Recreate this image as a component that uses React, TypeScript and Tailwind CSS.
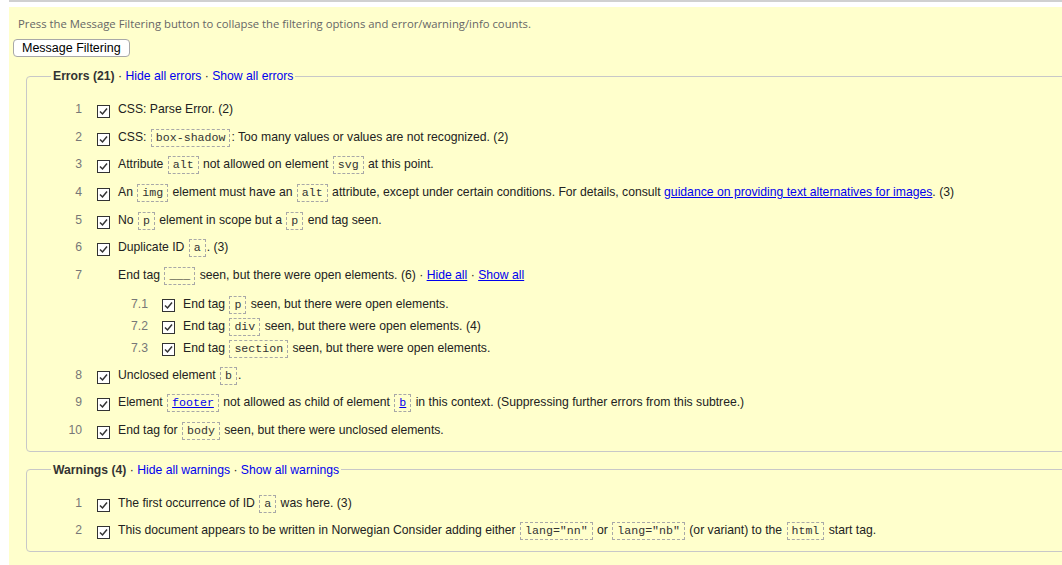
import React from "react";

const C = ({ children, link }: { children: React.ReactNode; link?: boolean }) => (
  <code className="mx-[1px] inline-block border border-dashed border-[#a8a8a8] px-[4px] align-baseline font-['Liberation_Mono',monospace] text-[11.6px] leading-[16px] text-[#333]">
    {link ? <a className="text-[#00e] underline">{children}</a> : children}
  </code>
);

const A = ({ children, underline }: { children: React.ReactNode; underline?: boolean }) => (
  <a className={underline ? "cursor-pointer text-[#00e] underline" : "cursor-pointer text-[#00e]"}>{children}</a>
);

function Check() {
  return (
    <span className="block h-[13px] w-[13px] border border-[#333] bg-white">
      <svg width="11" height="11" viewBox="0 0 11 11" className="block">
        <polyline points="2,5.5 4.5,8 9,2.5" fill="none" stroke="#333" strokeWidth="1.5" />
      </svg>
    </span>
  );
}

function Row({ n, children, box = true }: { n: string; children: React.ReactNode; box?: boolean }) {
  return (
    <div className="flex h-[27.67px] items-start">
      <span className="w-[55px] shrink-0 text-right leading-[27.67px] text-[#777]">{n}</span>
      <span className="ml-[15px] mt-[9px] w-[13px] shrink-0">{box && <Check />}</span>
      <span className="ml-[8px] whitespace-nowrap leading-[27.67px]">{children}</span>
    </div>
  );
}

function SubRow({ n, children }: { n: string; children: React.ReactNode }) {
  return (
    <div className="flex h-[22px] items-start">
      <span className="w-[30px] shrink-0 text-right leading-[22px] text-[#777]">{n}</span>
      <span className="ml-[14px] mt-[6px] w-[13px] shrink-0">
        <Check />
      </span>
      <span className="ml-[8px] whitespace-nowrap leading-[22px]">{children}</span>
    </div>
  );
}

function Group({ legend, hide, show, children, className }: { legend: string; hide: string; show: string; children: React.ReactNode; className?: string }) {
  return (
    <fieldset className={"ml-[13px] w-[1100px] rounded-[4px] border border-[#c8c8c8] pb-[6px] " + (className ?? "")}>
      <legend className="ml-[24px] px-[2px] leading-[14px]">
        <b className="text-[#333]">{legend}</b> · <A>{hide}</A> · <A>{show}</A>
      </legend>
      <div className="pt-[13px]">{children}</div>
    </fieldset>
  );
}

export default function App() {
  return (
    <div className="h-[565px] w-[1062px] overflow-hidden bg-white font-['Liberation_Sans',Arial,sans-serif] text-[12.2px] text-[#222]">
      <div className="ml-[9px] h-[2px] bg-[#d0d0d0]" />
      <div className="ml-[9px] mt-[5px] h-[600px] w-[1120px] bg-[#ffffcc] pl-[4px] pt-[10px]">
        <p className="pl-[5px] font-['Open_Sans',sans-serif] text-[11.3px] leading-[14px] text-[#666]">
          Press the Message Filtering button to collapse the filtering options and error/warning/info counts.
        </p>
        <button className="mt-[8px] block h-[18px] rounded-[4px] border border-[#a8a8a8] bg-white px-[8px] text-[12.5px] leading-[16px] text-black">
          Message Filtering
        </button>

        <Group legend="Errors (21)" hide="Hide all errors" show="Show all errors" className="mt-[12px]">
          <Row n="1">CSS: Parse Error. (2)</Row>
          <Row n="2">
            CSS: <C>box-shadow</C>: Too many values or values are not recognized. (2)
          </Row>
          <Row n="3">
            Attribute <C>alt</C> not allowed on element <C>svg</C> at this point.
          </Row>
          <Row n="4">
            An <C>img</C> element must have an <C>alt</C> attribute, except under certain conditions. For details, consult{" "}
            <A underline>guidance on providing text alternatives for images</A>. (3)
          </Row>
          <Row n="5">
            No <C>p</C> element in scope but a <C>p</C> end tag seen.
          </Row>
          <Row n="6">
            Duplicate ID <C>a</C>. (3)
          </Row>
          <div>
            <Row n="7" box={false}>
              End tag <C>___</C> seen, but there were open elements. (6) · <A underline>Hide all</A> · <A underline>Show all</A>
            </Row>
            <div className="pb-[3px] pl-[91px] pt-[3px]">
              <SubRow n="7.1">
                End tag <C>p</C> seen, but there were open elements.
              </SubRow>
              <SubRow n="7.2">
                End tag <C>div</C> seen, but there were open elements. (4)
              </SubRow>
              <SubRow n="7.3">
                End tag <C>section</C> seen, but there were open elements.
              </SubRow>
            </div>
          </div>
          <Row n="8">
            Unclosed element <C>b</C>.
          </Row>
          <Row n="9">
            Element <C link>footer</C> not allowed as child of element <C link>b</C> in this context. (Suppressing further errors from this subtree.)
          </Row>
          <Row n="10">
            End tag for <C>body</C> seen, but there were unclosed elements.
          </Row>
        </Group>

        <Group legend="Warnings (4)" hide="Hide all warnings" show="Show all warnings" className="mt-[11px]">
          <Row n="1">
            The first occurrence of ID <C>a</C> was here. (3)
          </Row>
          <Row n="2">
            This document appears to be written in Norwegian Consider adding either <C>lang="nn"</C> or <C>lang="nb"</C> (or variant) to the{" "}
            <C>html</C> start tag.
          </Row>
        </Group>
      </div>
    </div>
  );
}
